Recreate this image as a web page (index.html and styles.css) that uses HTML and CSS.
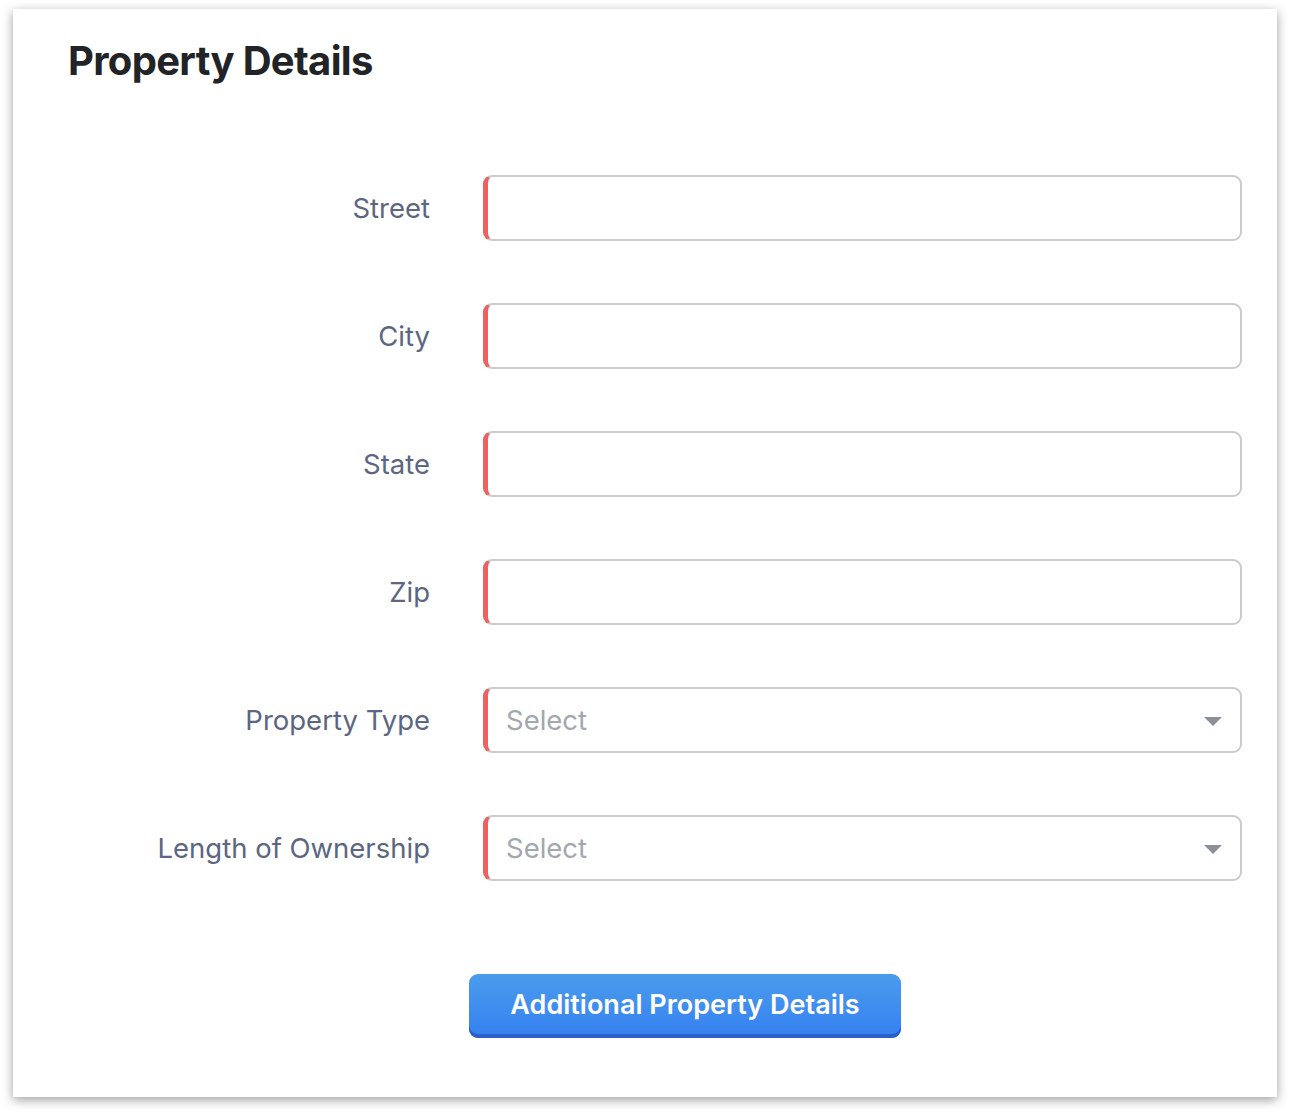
FILE: index.html
```html
<!DOCTYPE html>
<html>
<head>
<meta charset="utf-8">
<link rel="stylesheet" href="styles.css">
</head>
<body>
<div class="card">
  <h1 class="title">Property Details</h1>
  <div class="form">
    <div class="row"><label class="label">Street</label><div class="field"></div></div>
    <div class="row"><label class="label">City</label><div class="field"></div></div>
    <div class="row"><label class="label">State</label><div class="field"></div></div>
    <div class="row"><label class="label">Zip</label><div class="field"></div></div>
    <div class="row"><label class="label">Property Type</label><div class="field select"><span class="placeholder">Select</span><span class="caret"></span></div></div>
    <div class="row"><label class="label">Length of Ownership</label><div class="field select"><span class="placeholder">Select</span><span class="caret"></span></div></div>
  </div>
  <div class="actions">
    <button class="btn">Additional Property Details</button>
  </div>
</div>
</body>
</html>
```
FILE: styles.css
```css
html, body {
  margin: 0;
  padding: 0;
  background: #ffffff;
}
body {
  padding: 9px 14px 18px 13px;
  font-family: Inter, "Liberation Sans", sans-serif;
}
.card {
  background: #ffffff;
  box-shadow: 0 3px 10px rgba(0, 0, 0, 0.38);
  padding: 28px 35px 59px 55px;
  width: 1174px;
}
.title {
  margin: 0;
  font-size: 40px;
  font-weight: 700;
  color: #222326;
  line-height: 48px;
  letter-spacing: -0.7px;
}
.form {
  margin-top: 90px;
  display: flex;
  flex-direction: column;
  gap: 62px;
}
.row {
  display: flex;
  align-items: center;
}
.label {
  width: 362px;
  text-align: right;
  font-size: 27.5px;
  color: #5c6680;
  margin-right: 53px;
}
.field {
  flex: 1;
  height: 66px;
  box-sizing: border-box;
  border: 2px solid #c9cbcf;
  border-left: 5px solid #ec6261;
  border-radius: 9px;
  display: flex;
  align-items: center;
  padding: 0 18px 0 18px;
}
.placeholder {
  flex: 1;
  font-size: 27.5px;
  color: #a3a7b0;
}
.caret {
  width: 0;
  height: 0;
  border-left: 9px solid transparent;
  border-right: 9px solid transparent;
  border-top: 9px solid #8c8f95;
  margin-top: 2px;
}
.actions {
  display: flex;
  justify-content: center;
  margin-top: 93px;
  padding-left: 60px;
}
.btn {
  width: 432px;
  height: 64px;
  border: none;
  border-radius: 9px;
  background: linear-gradient(#4a9cec, #3580f1);
  box-shadow: inset 0 -4px 0 #2b60c8;
  color: #ffffff;
  font-family: Inter, "Liberation Sans", sans-serif;
  font-size: 27px;
  font-weight: 600;
  padding: 0 0 4px 0;
}
```
